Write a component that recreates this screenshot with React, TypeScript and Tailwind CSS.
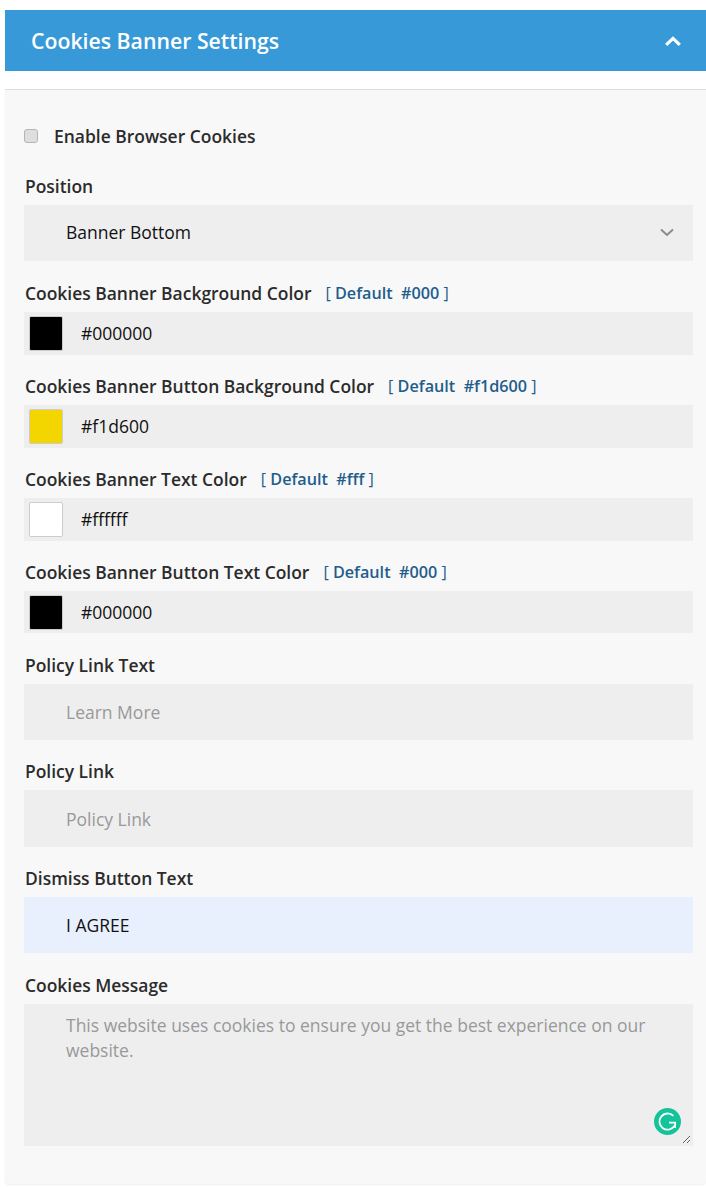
import React from 'react';

const colorFields = [
  { label: 'Cookies Banner Background Color', def: '#000', value: '#000000' },
  { label: 'Cookies Banner Button Background Color', def: '#f1d600', value: '#f1d600' },
  { label: 'Cookies Banner Text Color', def: '#fff', value: '#ffffff' },
  { label: 'Cookies Banner Button Text Color', def: '#000', value: '#000000' },
];

const FieldLabel: React.FC<{ children: React.ReactNode }> = ({ children }) => (
  <label className="flex h-[50.2px] items-end pb-[7px] pl-px text-[17.45px] font-semibold leading-6 text-[#2b2b2b]">
    {children}
  </label>
);

const inputClass =
  'block h-[56.5px] w-full bg-[#eeeeee] pl-[42px] pr-4 text-[17.5px] text-[#111111] outline-none placeholder:text-[#999999]';

const App: React.FC = () => {
  return (
    <div className="min-h-[1187px] bg-white pt-[10px] pl-[5px] font-['Open_Sans',sans-serif]">
      <div className="flex h-[61px] items-center justify-between bg-[#3899d8] pl-[26px] pr-[25px]">
        <h2 className="pt-px text-[21.25px] font-semibold text-white">Cookies Banner Settings</h2>
        <svg width="16" height="10" viewBox="0 0 16 10" fill="none" stroke="white" strokeWidth="3.2">
          <path d="M1.2 8.8 8 2.4l6.8 6.4" />
        </svg>
      </div>

      <div className="mt-[18px] h-[1095px] rounded-b-[4px] border-t border-[#dddddd] bg-[#f8f8f8] pl-[19px] pr-[13px] shadow-[0_1px_2px_rgba(0,0,0,0.07)]">
        <div className="flex h-[61px] items-end pb-[3px]">
          <input
            type="checkbox"
            className="mb-[5px] h-[14px] w-[14px] appearance-none rounded-[3px] border border-[#b5b5b5] bg-[#dedede]"
          />
          <span className="ml-[16px] text-[17.45px] font-semibold leading-6 text-[#2b2b2b]">
            Enable Browser Cookies
          </span>
        </div>

        <label className="flex h-[54.4px] items-end pb-[7px] pl-px text-[17.45px] font-semibold leading-6 text-[#2b2b2b]">
          Position
        </label>
        <div className="relative h-[56.5px]">
          <select className={`${inputClass} !h-[56px] appearance-none pb-[2px]`} defaultValue="bottom">
            <option value="bottom">Banner Bottom</option>
          </select>
          <svg
            className="absolute right-[19px] top-[23px]"
            width="14"
            height="9"
            viewBox="0 0 14 9"
            fill="none"
            stroke="#8a8a8a"
            strokeWidth="2"
          >
            <path d="M1 1.5 7 7l6-5.5" />
          </svg>
        </div>

        {colorFields.map((f) => (
          <div key={f.label}>
            <FieldLabel>
              {f.label}
              <span className="ml-[14px] text-[16.2px] font-semibold text-[#1f5d8c]">
                <span className="font-normal">[</span> Default &nbsp;{f.def}{' '}
                <span className="font-normal">]</span>
              </span>
            </FieldLabel>
            <div className="flex h-[42.7px] items-center bg-[#eeeeee] pl-[5px]">
              <span
                className="h-[35px] w-[34px] shrink-0 rounded-[2px] border border-[#cccccc]"
                style={{ backgroundColor: f.value === '#f1d600' ? '#f3d600' : f.value }}
              />
              <input
                readOnly
                value={f.value}
                className="ml-[18px] w-full bg-transparent text-[17.5px] text-[#111111] outline-none"
              />
            </div>
          </div>
        ))}

        <FieldLabel>Policy Link Text</FieldLabel>
        <input placeholder="Learn More" className={inputClass} />

        <FieldLabel>Policy Link</FieldLabel>
        <input placeholder="Policy Link" className={inputClass} />

        <FieldLabel>Dismiss Button Text</FieldLabel>
        <input readOnly value="I AGREE" className={`${inputClass} !bg-[#e8f0fe]`} />

        <FieldLabel>Cookies Message</FieldLabel>
        <div className="relative">
          <textarea
            placeholder="This website uses cookies to ensure you get the best experience on our website."
            className="block h-[142px] w-full border-2 border-transparent bg-[#eeeeee] pl-[40px] pr-4 pt-[7px] text-[17.5px] leading-[25px] text-[#111111] outline-none placeholder:text-[#999999]"
          />
          <svg className="absolute bottom-[11px] right-[12px]" width="27" height="27" viewBox="0 0 26 26" fill="none">
            <circle cx="13" cy="13" r="13" fill="#15c39a" />
            <path d="M18.6 7.6A7.8 7.8 0 1 0 19.8 17" stroke="white" strokeWidth="1.7" />
            <path d="M14.5 14h5.8v5.2" stroke="white" strokeWidth="1.7" />
          </svg>
        </div>
      </div>
    </div>
  );
};

export default App;
